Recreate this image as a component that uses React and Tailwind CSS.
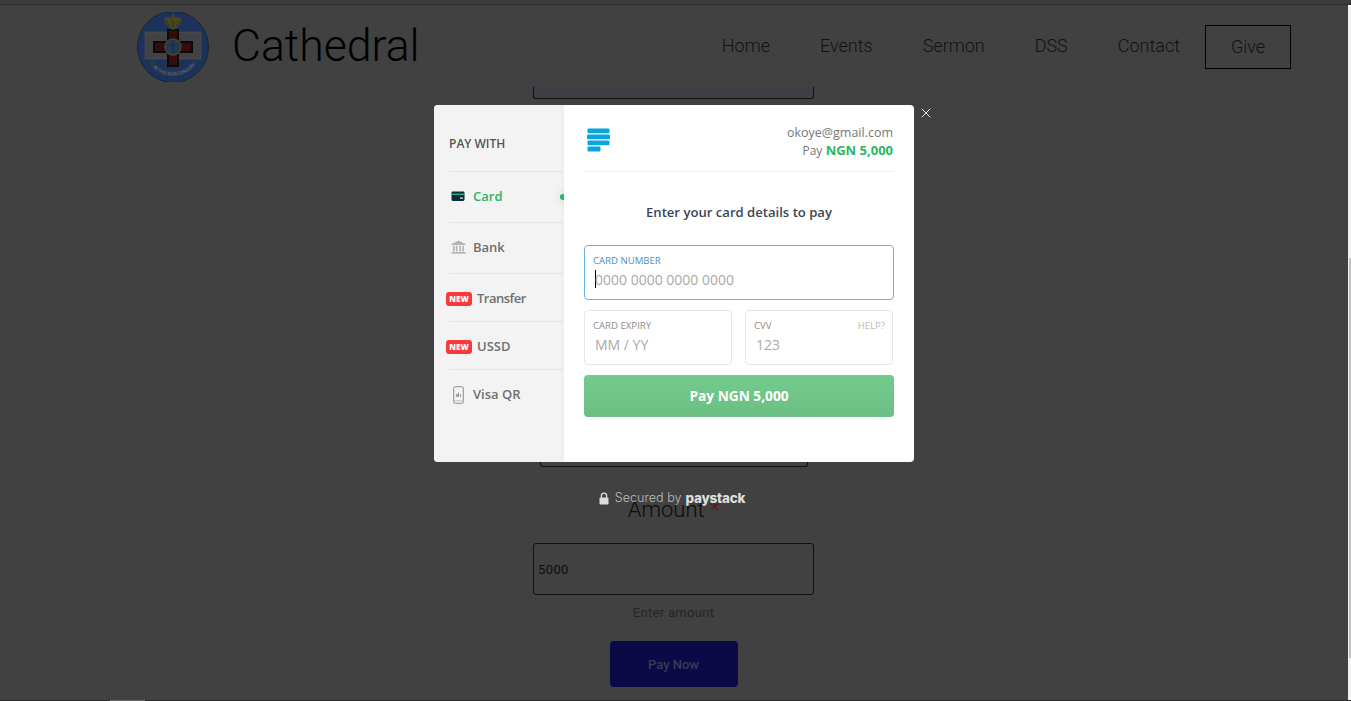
import { X } from 'lucide-react';

const navLinks = ['Home', 'Events', 'Sermon', 'DSS', 'Contact'];

function ChurchLogo() {
  return (
    <svg width="74" height="70" viewBox="0 0 74 70" className="shrink-0">
      <circle cx="37" cy="35" r="35.5" fill="#1d3259" stroke="#17233a" strokeWidth="1" />
      <rect x="9" y="20" width="56" height="27" fill="#424245" stroke="#50505a" strokeWidth="0.6" />
      <path d="M32 18h10v12h14v10H42v14H32V40H18V30h14z" fill="#360b0e" stroke="#0b0b0b" strokeWidth="2" />
      <circle cx="37" cy="35" r="8" fill="#233a56" stroke="#4a4724" strokeWidth="1.4" />
      <path d="M37 28v14M33 33h8" stroke="#1b2b40" strokeWidth="1" />
      <path d="M37 2c-2 1-2 3-1 4-4-2-6-1-8 1 1 4 3 7 6 9l3 2 3-2c3-2 5-5 6-9-2-2-4-3-8-1 1-1 1-3-1-4z" fill="#4a4620" />
      <path d="M30 8l3 6M44 8l-3 6M37 8v8" stroke="#2c2a14" strokeWidth="0.8" />
      <path d="M12 50a29 29 0 0 0 50 0l-5-2a24 24 0 0 1-40 0z" fill="#273652" />
      <path id="logo-arc" d="M13 50a28 28 0 0 0 48 0" fill="none" />
      <text fontSize="4.4" fill="#6c7482" fontFamily="Roboto, sans-serif">
        <textPath href="#logo-arc" startOffset="12%">IN THIS SIGN CONQUER</textPath>
      </text>
    </svg>
  );
}

function PaystackMark() {
  return (
    <svg width="24" height="24" viewBox="0 0 24 24">
      <rect x="0.5" y="0.5" width="22" height="4.8" rx="1" fill="#0ba4db" />
      <rect x="0" y="6.4" width="23" height="4.8" rx="1" fill="#0ba4db" />
      <rect x="0.5" y="12.4" width="22" height="4.8" rx="1" fill="#0ba4db" />
      <rect x="0.5" y="18.6" width="13" height="4.8" rx="1" fill="#0ba4db" />
    </svg>
  );
}

function CardIcon() {
  return (
    <svg width="14" height="11" viewBox="0 0 14 11" className="-mt-[2px]">
      <rect x="0.5" y="0.5" width="13" height="9.5" rx="1.4" fill="#0b2a40" />
      <rect x="0.5" y="2.6" width="13" height="1.4" fill="#2fb56a" />
      <rect x="9" y="6.5" width="3" height="1.2" fill="#e8eef2" />
    </svg>
  );
}

function BankIcon() {
  return (
    <svg width="15" height="14" viewBox="0 0 15 14" fill="#b4b4b4" className="-mt-[2px]">
      <path d="M7.5 0.5L14.5 4v1H0.5V4z" />
      <path d="M2 5.8h1.6v5.7H2zM4.9 5.8h1.6v5.7H4.9zM8.4 5.8H10v5.7H8.4zM11.4 5.8H13v5.7h-1.6z" />
      <rect x="0.5" y="12" width="14" height="1.6" />
    </svg>
  );
}

function QrPhoneIcon() {
  return (
    <svg width="11" height="18" viewBox="0 0 11 18" fill="none" className="-mt-[1px]">
      <rect x="0.7" y="0.7" width="9.6" height="16.6" rx="1.5" stroke="#8e8e8e" strokeWidth="1" />
      <path d="M3 11l1-3 1 3M5.5 11V6.5M7.5 11V8" stroke="#8e8e8e" strokeWidth="0.9" />
      <path d="M1 14.8h9" stroke="#b8b8b8" strokeWidth="0.8" />
    </svg>
  );
}

function LockIcon() {
  return (
    <svg width="10" height="13" viewBox="0 0 10 13" className="mr-[6px]">
      <path d="M2.4 6V3.8a2.6 2.6 0 0 1 5.2 0V6" fill="none" stroke="#dcdcdc" strokeWidth="1.3" />
      <rect x="0.5" y="5.4" width="9" height="7.2" rx="1.2" fill="#dcdcdc" />
    </svg>
  );
}

function NewBadge() {
  return (
    <span className="flex h-[14px] w-[26px] items-center justify-center rounded-[3px] bg-[#f73b3d] text-[8px] font-extrabold leading-none text-white">
      NEW
    </span>
  );
}

function PayOption({ icon, label, active, badge, height, last }) {
  return (
    <div
      className={`relative ml-[15px] flex items-center ${last ? 'pt-[2px]' : 'border-b border-[#e4e4e4]'} ${badge ? 'pt-[2px]' : ''} ${height}`}
    >
      {badge ? (
        <div className="-ml-[3px] mr-[5px] flex items-center">
          <NewBadge />
        </div>
      ) : (
        <div className="flex w-[24px] items-center justify-center pr-[6px]">{icon}</div>
      )}
      <span className={`text-[13px] font-semibold ${active ? 'text-[#29b665]' : 'text-[#6f6f6f]'} ${label === 'Transfer' ? 'tracking-[-0.5px]' : ''}`}>
        {label}
      </span>
      {active && (
        <div className="absolute right-0 top-[12px] flex h-[26px] w-[14px] items-center justify-end overflow-hidden">
          <div className="-mr-[2px] h-[6px] w-[6px] rounded-full bg-[#29b665] shadow-[0_0_6px_4px_rgba(41,182,101,0.07)]" />
        </div>
      )}
    </div>
  );
}

function CardField({ label, placeholder, help, className }) {
  return (
    <div className={`flex h-[55px] flex-col rounded-[4px] border border-[#e6e6e6] pl-[8px] pr-[7px] pt-[9px] ${className}`}>
      <div className="flex justify-between text-[9.6px] leading-[12px] text-[#8d8d8d]">
        <span>{label}</span>
        {help && <span className="text-[#bbbbbb]">{help}</span>}
      </div>
      <span className="ml-[2px] mt-[3px] text-[14px] leading-[19px] text-[#a9a9a9]">{placeholder}</span>
    </div>
  );
}

function PaystackModal() {
  return (
    <div className="absolute inset-x-0 top-[100px] flex flex-col items-center font-['Open_Sans',sans-serif]">
      <div className="relative flex h-[357px] w-[480px] rounded-[4px] bg-white">
        <aside className="w-[130px] rounded-l-[4px] bg-[#f3f3f3] shadow-[inset_-8px_0_8px_-8px_rgba(0,0,0,0.05)]">
          <div className="ml-[15px] h-[67px] border-b border-[#e4e4e4] pt-[30px] text-[12px] font-semibold leading-[17px] text-[#555555]">
            PAY WITH
          </div>
          <PayOption icon={<CardIcon />} label="Card" active height="h-[51px]" />
          <PayOption icon={<BankIcon />} label="Bank" height="h-[51px]" />
          <PayOption badge label="Transfer" height="h-[48px]" />
          <PayOption badge label="USSD" height="h-[48px]" />
          <PayOption icon={<QrPhoneIcon />} label="Visa QR" height="h-[48px]" last />
        </aside>

        <section className="flex-1 px-[20px]">
          <div className="flex h-[67px] items-start justify-between border-b border-[#f1f1f1] pt-[19px]">
            <div className="ml-[3px] mt-[4px]">
              <PaystackMark />
            </div>
            <div className="pr-px text-right text-[12.5px] leading-[17px] text-[#777777]">
              <div>okoye@gmail.com</div>
              <div className="leading-[19px]">
                <span className="text-[12px]">Pay</span>{' '}
                <span className="text-[13px] font-bold text-[#29b665]">NGN 5,000</span>
              </div>
            </div>
          </div>

          <p className="mt-[31px] text-center text-[13.1px] font-semibold leading-[18px] text-[#3b4557]">
            Enter your card details to pay
          </p>

          <div className="relative mt-[24px] h-[55px] rounded-[4px] border border-[#6aaee6] pl-[8px] pr-[9px] pt-[9px]">
            <div className="text-[9.6px] leading-[12px] text-[#4a8fc7]">CARD NUMBER</div>
            <div className="ml-[2px] mt-[3px] flex text-[14px] leading-[19px] text-[#a9a9a9]">
              <span className="-mr-px h-[18px] w-px bg-black" />
              0000 0000 0000 0000
            </div>
          </div>

          <div className="mt-[10px] flex justify-between pr-px">
            <CardField label="CARD EXPIRY" placeholder="MM / YY" className="w-[148px]" />
            <CardField label="CVV" placeholder="123" help="HELP?" className="w-[148px]" />
          </div>

          <button className="mt-[10px] h-[42px] w-full rounded-[4px] bg-gradient-to-b from-[#75ca8e] to-[#6bbf83] pt-px text-[13.7px] font-bold text-white">
            Pay NGN 5,000
          </button>
        </section>

        <button className="absolute -right-[20px] top-0 text-white">
          <X size={16} strokeWidth={1.3} />
        </button>
      </div>

      <div className="mt-[28px] -ml-[4px] flex h-[16px] items-center font-['Inter',sans-serif]">
        <LockIcon />
        <span className="text-[12.6px] font-light text-[#bdbdbd]">Secured by</span>
        <span className="ml-[4px] text-[13.4px] font-extrabold tracking-[-0.2px] text-[#dddddd]">paystack</span>
      </div>
    </div>
  );
}

export default function App() {
  return (
    <div className="flex h-[701px] w-full flex-col overflow-hidden bg-[#414141] font-['Roboto',sans-serif]">
      <div className="h-[5px] shrink-0 border-b border-[#2c2c2c] bg-[#3b3c3d]" />

      <div className="flex min-h-0 flex-1">
        <main className="relative flex-1">
          <header className="flex h-[82px] items-start pl-[136px] pr-[57px]">
            <div className="mt-[7px]">
              <ChurchLogo />
            </div>
            <span className="ml-[22px] mt-[11px] text-[44.6px] font-light leading-[60px] text-black">Cathedral</span>
            <nav className="ml-auto mt-[20px] flex items-center gap-[50px] text-[18px] font-light text-[#111111]">
              {navLinks.map((link) => (
                <span key={link} className="-mt-[2px] leading-[42px]">
                  {link}
                </span>
              ))}
              <span className="-ml-[25px] flex h-[44px] w-[86px] items-center justify-center border-[1.5px] border-black pb-[2px]">
                Give
              </span>
            </nav>
          </header>

          <div className="ml-[533px] flex w-[281px] flex-col items-center">
            <div className="h-[12px] w-full rounded-b-[3px] border-x border-b border-[#111111] bg-[#3f3f46]" />
            <div className="mt-[338px] h-[30px] w-[268px] rounded-b-[3px] border-x border-b border-[#111111]" />
            <label className="mt-[30px] text-[22px] font-light leading-[26px] text-[#0c0c0c]">
              Amount <span className="text-[#5f1212]">*</span>
            </label>
            <div className="mt-[20px] flex h-[52px] w-full items-center rounded-[3px] border border-[#111111] px-[4px] pt-[2px] text-[13px] tracking-[0.4px] text-[#0d0d0d]">
              5000
            </div>
            <p className="mt-[10px] text-[13px] leading-[16px] tracking-[0.3px] text-[#252525]">Enter amount</p>
            <button className="mt-[20px] h-[46px] w-[128px] rounded-[4px] bg-[#0b0a47] pt-[2px] text-[13px] font-medium text-[#3a3a56]">
              Pay Now
            </button>
          </div>

          <PaystackModal />
        </main>

        <div className="w-[3px] shrink-0 bg-[#f1f1f1] pt-[253px]">
          <div className="ml-px h-[400px] w-[2px] bg-[#c1c1c1]" />
        </div>
      </div>

      <div className="flex h-px shrink-0 bg-[#2a2a2a] pl-[110px]">
        <div className="h-px w-[35px] bg-[#6a6a6a]" />
      </div>
    </div>
  );
}
